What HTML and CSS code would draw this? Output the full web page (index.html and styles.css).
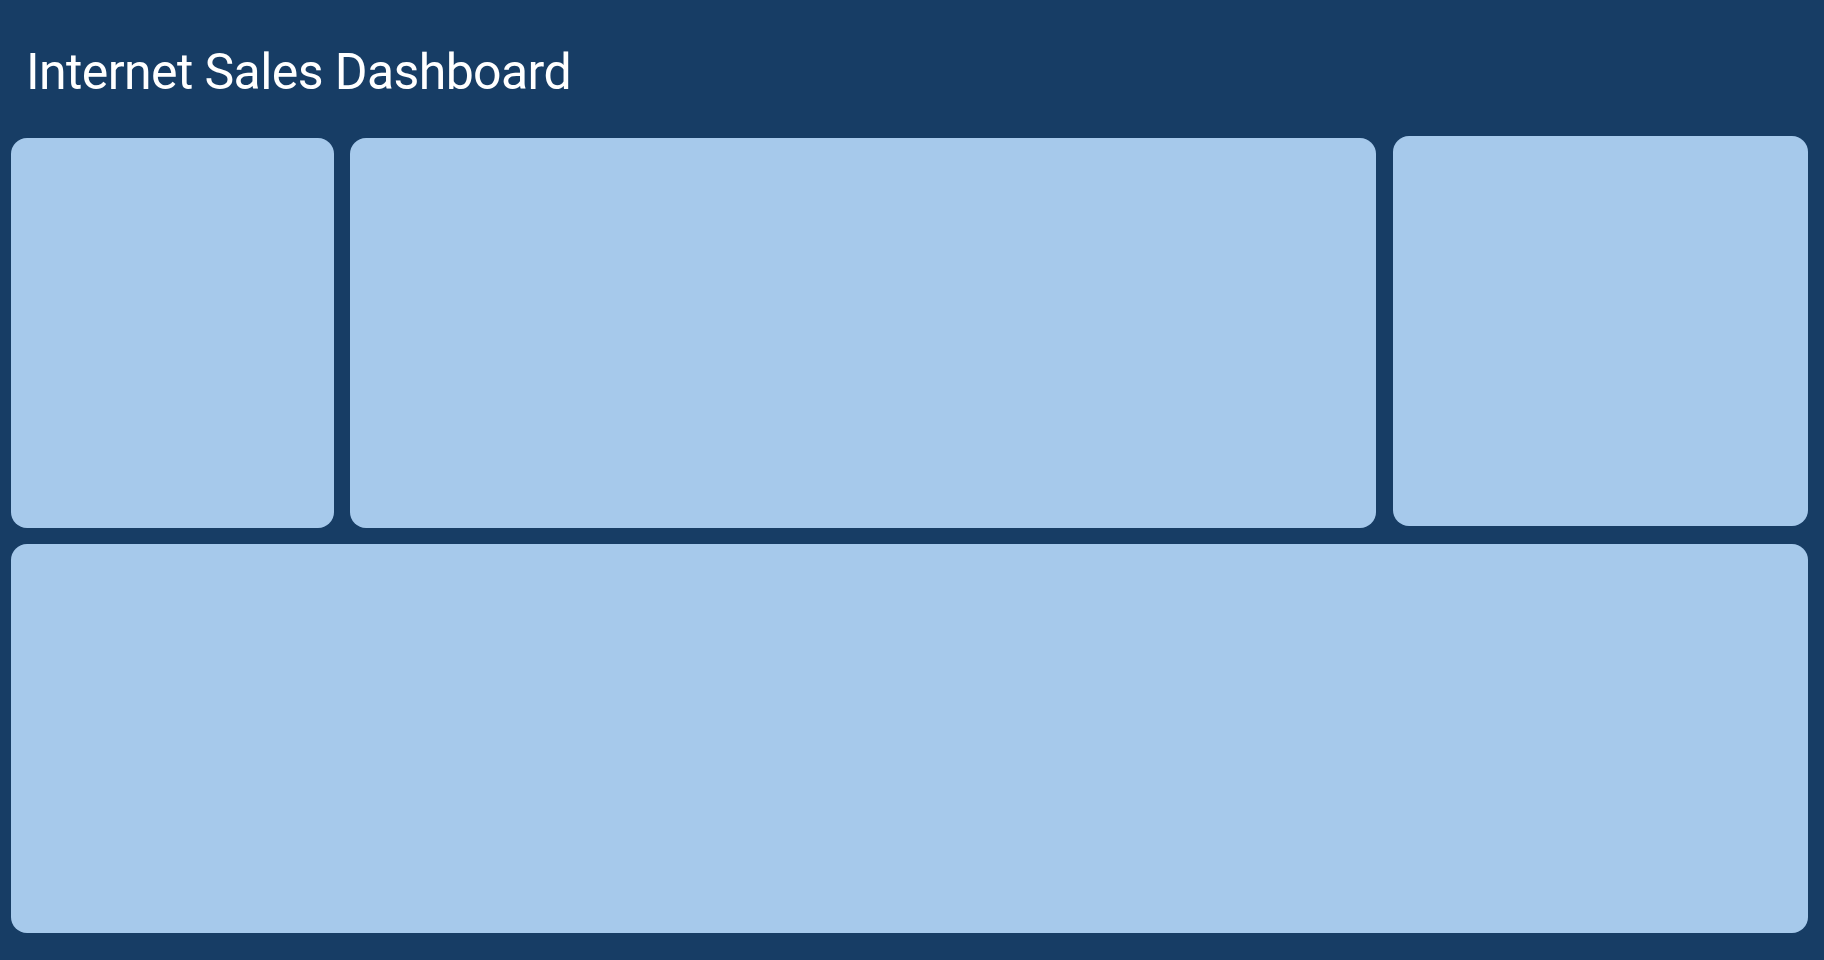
FILE: index.html
```html
<!DOCTYPE html>
<html lang="en">
<head>
<meta charset="utf-8">
<title>Internet Sales Dashboard</title>
<link rel="stylesheet" href="styles.css">
</head>
<body>
<div class="page">
  <header class="header">
    <h1 class="title">Internet Sales Dashboard</h1>
  </header>
  <main class="grid">
    <section class="card card-a"></section>
    <section class="card card-b"></section>
    <section class="card card-c"></section>
    <section class="card card-d"></section>
  </main>
</div>
</body>
</html>
```
FILE: styles.css
```css
html, body {
  margin: 0;
  padding: 0;
  background: #173d65;
}
.page {
  width: 1824px;
  height: 960px;
  padding-left: 11px;
  box-sizing: border-box;
  overflow: hidden;
}
.header {
  height: 138px;
  display: flex;
  align-items: flex-start;
}
.title {
  margin: 39px 0 0 15px;
  font-family: Roboto, "Liberation Sans", sans-serif;
  font-weight: 400;
  font-size: 50px;
  line-height: 66px;
  color: #ffffff;
  letter-spacing: -0.6px;
}
.grid {
  display: grid;
  grid-template-columns: 323px 1027px 415px;
  grid-template-rows: 390px 389px;
  column-gap: 16px;
  row-gap: 16px;
}
.card {
  background: #a6c9eb;
  border-radius: 16px;
}
.card-b {
  margin-right: 1px;
}
.card-c {
  margin-top: -2px;
  margin-bottom: 2px;
}
.card-d {
  grid-column: 1 / 4;
}
```
